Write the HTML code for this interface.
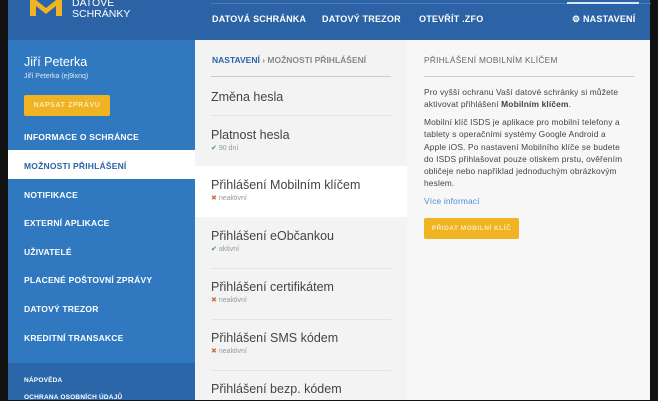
<!DOCTYPE html>
<html><head><meta charset="utf-8"><style>
*{margin:0;padding:0;box-sizing:border-box}
body{width:658px;height:400px;overflow:hidden;background:#111;font-family:"Liberation Sans",sans-serif;position:relative}
.a{position:absolute}
#hdr{left:8px;top:0;width:642px;height:40px;background:#2c63a6}
.nav{top:14px;color:#fff;font-size:9px;font-weight:bold;letter-spacing:.2px}
#side{left:8px;top:40px;width:187px;height:360px;background:#3079c0}
.si{left:16px;color:#fff;font-size:8.5px;font-weight:bold;letter-spacing:.2px}
#mid{left:195px;top:40px;width:212px;height:360px;background:#f3f3f3}
#right{left:407px;top:40px;width:243px;height:360px;background:#f7f7f7}
.it{left:211px;color:#444;font-size:12.5px}
.st{left:211px;font-size:7px;color:#999}
.ln{left:211px;width:180px;height:1px;background:#e4e4e4}
p{color:#444;font-size:8.4px;line-height:12.3px;letter-spacing:.15px;white-space:nowrap}
</style></head><body>
<div id="hdr" class="a"></div>
<svg class="a" style="left:28px;top:0" width="36" height="20"><path d="M2 0 L2 16 L8 16 L8 6 L18 14 L28 6 L28 16 L34 16 L34 0 L28 0 L18 8 L8 0Z" fill="#f0b323"/></svg>
<div class="a" style="left:72px;top:-2px;color:#fff;font-size:10.5px;line-height:11px">DATOVÉ<br>SCHRÁNKY</div>
<div class="a" style="left:211px;top:3px;width:440px;height:1px;background:#4a7cb8"></div>
<div class="a" style="left:567px;top:2px;width:72px;height:2px;background:#dce6f2"></div>
<div class="a nav" style="left:212px">DATOVÁ SCHRÁNKA</div>
<div class="a nav" style="left:322px">DATOVÝ TREZOR</div>
<div class="a nav" style="left:419px">OTEVŘÍT .ZFO</div>
<div class="a nav" style="left:572px">⚙ NASTAVENÍ</div>

<div id="side" class="a"></div>
<div class="a" style="left:24px;top:55px;color:#fff;font-size:12.5px">Jiří Peterka</div>
<div class="a" style="left:24px;top:73px;color:#dce8f5;font-size:7px">Jiří Peterka (ej9ixnq)</div>
<div class="a" style="left:24px;top:95px;width:86px;height:21px;background:#f0b323;border-radius:2px;color:#fde9b8;font-size:7px;font-weight:bold;letter-spacing:.6px;text-align:center;line-height:21px">NAPSAT ZPRÁVU</div>
<div class="a si" style="left:24px;top:132px">INFORMACE O SCHRÁNCE</div>
<div class="a" style="left:8px;top:150px;width:187px;height:29px;background:#fff"></div>
<div class="a si" style="left:24px;top:161px;color:#2c63a6">MOŽNOSTI PŘIHLÁŠENÍ</div>
<div class="a si" style="left:24px;top:190px">NOTIFIKACE</div>
<div class="a si" style="left:24px;top:218px">EXTERNÍ APLIKACE</div>
<div class="a si" style="left:24px;top:247px">UŽIVATELÉ</div>
<div class="a si" style="left:24px;top:275px">PLACENÉ POŠTOVNÍ ZPRÁVY</div>
<div class="a si" style="left:24px;top:304px">DATOVÝ TREZOR</div>
<div class="a si" style="left:24px;top:333px">KREDITNÍ TRANSAKCE</div>
<div class="a" style="left:8px;top:363px;width:187px;height:37px;background:#2b67a8"></div>
<div class="a si" style="left:24px;top:377px;font-size:6.5px">NÁPOVĚDA</div>
<div class="a si" style="left:24px;top:394px;font-size:6.5px">OCHRANA OSOBNÍCH ÚDAJŮ</div>

<div id="mid" class="a"></div>
<div class="a" style="left:212px;top:55px;font-size:8.5px;font-weight:bold;color:#2c63a6">NASTAVENÍ <span style="color:#888">› MOŽNOSTI PŘIHLÁŠENÍ</span></div>
<div class="a" style="left:211px;top:76px;width:180px;height:1px;background:#ccc"></div>
<div class="a it" style="top:90px">Změna hesla</div>
<div class="a ln" style="top:115px"></div>
<div class="a it" style="top:128px">Platnost hesla</div>
<div class="a st" style="top:144px"><span style="color:#3a9a3a">✔</span> 90 dní</div>
<div class="a" style="left:195px;top:166px;width:212px;height:51px;background:#fff"></div>
<div class="a it" style="top:178px">Přihlášení Mobilním klíčem</div>
<div class="a st" style="top:194px"><span style="color:#c9743a">✖</span> neaktivní</div>
<div class="a it" style="top:229px">Přihlášení eObčankou</div>
<div class="a st" style="top:245px"><span style="color:#3a9a3a">✔</span> aktivní</div>
<div class="a ln" style="top:268px"></div>
<div class="a it" style="top:280px">Přihlášení certifikátem</div>
<div class="a st" style="top:296px"><span style="color:#c9743a">✖</span> neaktivní</div>
<div class="a ln" style="top:319px"></div>
<div class="a it" style="top:331px">Přihlášení SMS kódem</div>
<div class="a st" style="top:347px"><span style="color:#c9743a">✖</span> neaktivní</div>
<div class="a ln" style="top:370px"></div>
<div class="a it" style="top:382px">Přihlášení bezp. kódem</div>

<div id="right" class="a"></div>
<div class="a" style="left:424px;top:55px;font-size:8.3px;color:#666;letter-spacing:.3px">PŘIHLÁŠENÍ MOBILNÍM KLÍČEM</div>
<div class="a" style="left:424px;top:76px;width:210px;height:1px;background:#ccc"></div>
<p class="a" style="left:424px;top:86px">Pro vyšší ochranu Vaší datové schránky si můžete<br>aktivovat přihlášení <b>Mobilním klíčem</b>.</p>
<p class="a" style="left:424px;top:116px">Mobilní klíč ISDS je aplikace pro mobilní telefony a<br>tablety s operačními systémy Google Android a<br>Apple iOS. Po nastavení Mobilního klíče se budete<br>do ISDS přihlašovat pouze otiskem prstu, ověřením<br>obličeje nebo například jednoduchým obrázkovým<br>heslem.</p>
<div class="a" style="left:424px;top:196px;font-size:8.4px;color:#4a90d0;letter-spacing:.15px">Více informací</div>
<div class="a" style="left:424px;top:218px;width:95px;height:21px;background:#f0b323;border-radius:2px;color:#fde9b8;font-size:6.5px;font-weight:bold;letter-spacing:.5px;text-align:center;line-height:21px">PŘIDAT MOBILNÍ KLÍČ</div>
</body></html>
